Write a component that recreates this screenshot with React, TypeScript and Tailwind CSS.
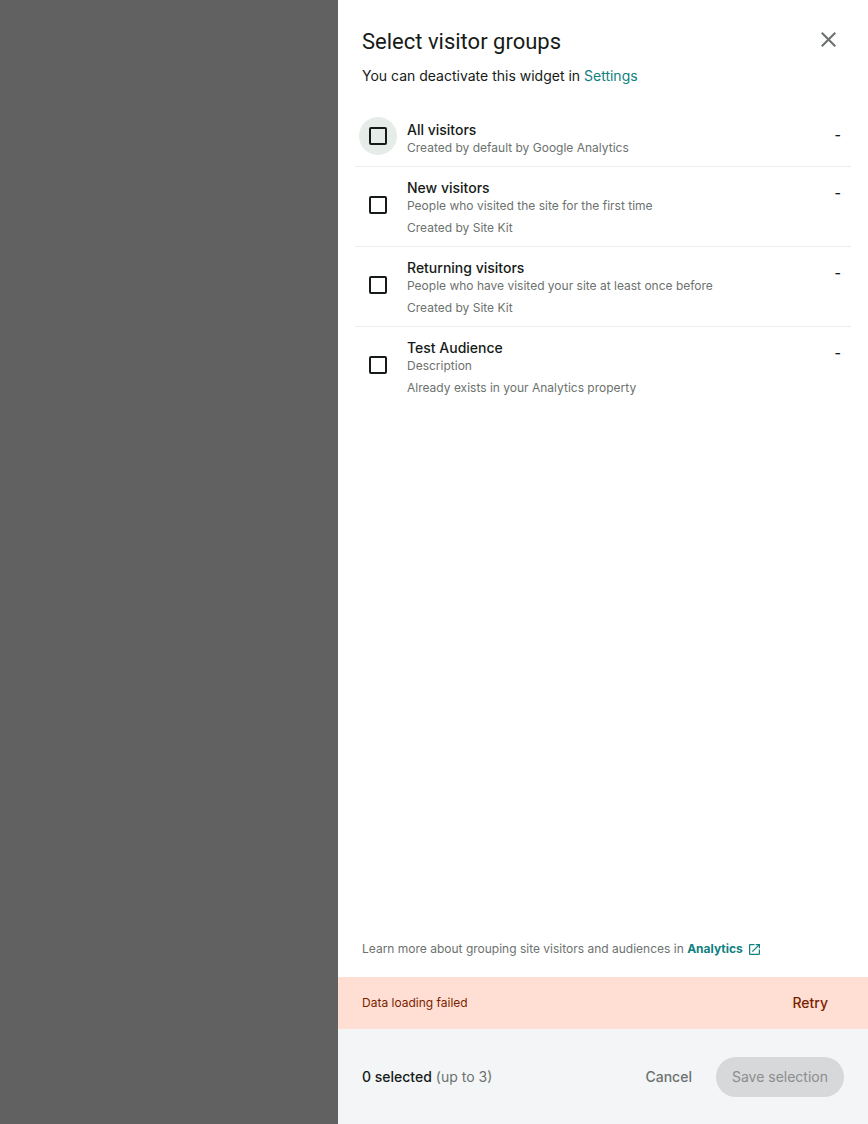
import { useState } from "react";

type Audience = { id: string; title: string; description: string; source?: string };

const audiences: Audience[] = [
  { id: "all", title: "All visitors", description: "Created by default by Google Analytics" },
  {
    id: "new",
    title: "New visitors",
    description: "People who visited the site for the first time",
    source: "Created by Site Kit",
  },
  {
    id: "returning",
    title: "Returning visitors",
    description: "People who have visited your site at least once before",
    source: "Created by Site Kit",
  },
  {
    id: "test",
    title: "Test Audience",
    description: "Description",
    source: "Already exists in your Analytics property",
  },
];

function AudienceRow({
  audience,
  checked,
  highlighted,
  onToggle,
}: {
  audience: Audience;
  checked: boolean;
  highlighted: boolean;
  onToggle: () => void;
}) {
  return (
    <li className="flex border-b border-[#ebeef0] pt-[11px] pb-2.5 pr-2.5 last:border-b-0">
      <div className="mr-1.5 flex w-[46px] shrink-0 items-center justify-center pb-1">
        <span
          className={
            highlighted
              ? "-my-1 flex size-[38px] items-center justify-center rounded-full bg-[#e6ece8]"
              : "-my-1 flex size-[38px] items-center justify-center rounded-full"
          }
        >
          <input
            id={audience.id}
            type="checkbox"
            checked={checked}
            onChange={onToggle}
            className="size-[18px] appearance-none rounded-[2px] border-2 border-[#161b18] checked:bg-[#161b18]"
          />
        </span>
      </div>
      <div className="min-w-0 flex-1">
        <label htmlFor={audience.id} className="block text-sm leading-5 font-medium text-[#161b18]">
          {audience.title}
        </label>
        <p className="text-xs leading-4 text-[#6c726e]">{audience.description}</p>
        {audience.source && <p className="mt-1.5 text-xs leading-4 text-[#6c726e]">{audience.source}</p>}
      </div>
      <span className="pt-[5px] text-sm leading-5 font-medium text-[#161b18]">-</span>
    </li>
  );
}

export default function App() {
  const [selected, setSelected] = useState<string[]>([]);
  const toggle = (id: string) =>
    setSelected((ids) => (ids.includes(id) ? ids.filter((i) => i !== id) : [...ids, id]));

  return (
    <div className="flex min-h-screen justify-end bg-[#616161] font-['Inter',sans-serif] text-[#161b18]">
      <section className="flex w-full max-w-[530px] flex-col bg-white">
        <header className="px-6 pt-7">
          <div className="flex items-start justify-between">
            <h1 className="font-['Roboto',sans-serif] text-[22px] leading-7">Select visitor groups</h1>
            <button type="button" aria-label="Close" className="mr-2 flex h-[22px] items-center text-[#6c726e]">
              <svg viewBox="0 0 15 15" className="size-[15px]" fill="currentColor">
                <path d="M15 1.5 13.5 0l-6 6-6-6L0 1.5l6 6-6 6L1.5 15l6-6 6 6 1.5-1.5-6-6z" />
              </svg>
            </button>
          </div>
          <p className="mt-2.5 text-sm leading-5">
            You can deactivate this widget in{" "}
            <a href="#settings" className="text-[#108080]">
              Settings
            </a>
          </p>
        </header>

        <ul className="mx-[17px] mt-[23px]">
          {audiences.map((a, i) => (
            <AudienceRow
              key={a.id}
              audience={a}
              checked={selected.includes(a.id)}
              highlighted={i === 0}
              onToggle={() => toggle(a.id)}
            />
          ))}
        </ul>

        <p className="mt-auto px-6 pt-6 pb-5 text-xs leading-4 text-[#6c726e]">
          Learn more about grouping site visitors and audiences in{" "}
          <a href="#analytics" className="inline-flex items-center gap-1.5 font-bold text-[#108080]">
            Analytics
            <svg viewBox="0 0 11 11" className="size-[11px]" fill="currentColor">
              <path d="M9.78 9.78H1.22V1.22H5.5V0H1.22C.54 0 0 .55 0 1.22v8.56C0 10.45.54 11 1.22 11h8.56c.67 0 1.22-.55 1.22-1.22V5.5H9.78ZM6.72 0v1.22h2.2L2.91 7.23l.86.86L9.78 2.08v2.2H11V0Z" />
            </svg>
          </a>
        </p>

        <div role="alert" className="flex min-h-[52px] items-center justify-between bg-[#ffded3] px-6 text-[#7a1e00]">
          <p className="text-xs leading-4">Data loading failed</p>
          <button type="button" className="px-4 text-sm leading-5 font-medium">
            Retry
          </button>
        </div>

        <footer className="flex items-center justify-between bg-[#f3f5f7] px-6 pt-7 pb-[27px]">
          <p className="text-sm leading-5 text-[#6c726e]">
            <span className="font-medium text-[#161b18]">{selected.length} selected</span> (up to 3)
          </p>
          <div className="flex items-center gap-6">
            <button type="button" className="text-sm leading-5 font-medium text-[#6c726e]">
              Cancel
            </button>
            <button
              type="button"
              disabled={selected.length === 0}
              className="h-10 rounded-full bg-[#d6d8d9] px-4 text-sm leading-5 text-[#8b8d8e]"
            >
              Save selection
            </button>
          </div>
        </footer>
      </section>
    </div>
  );
}
